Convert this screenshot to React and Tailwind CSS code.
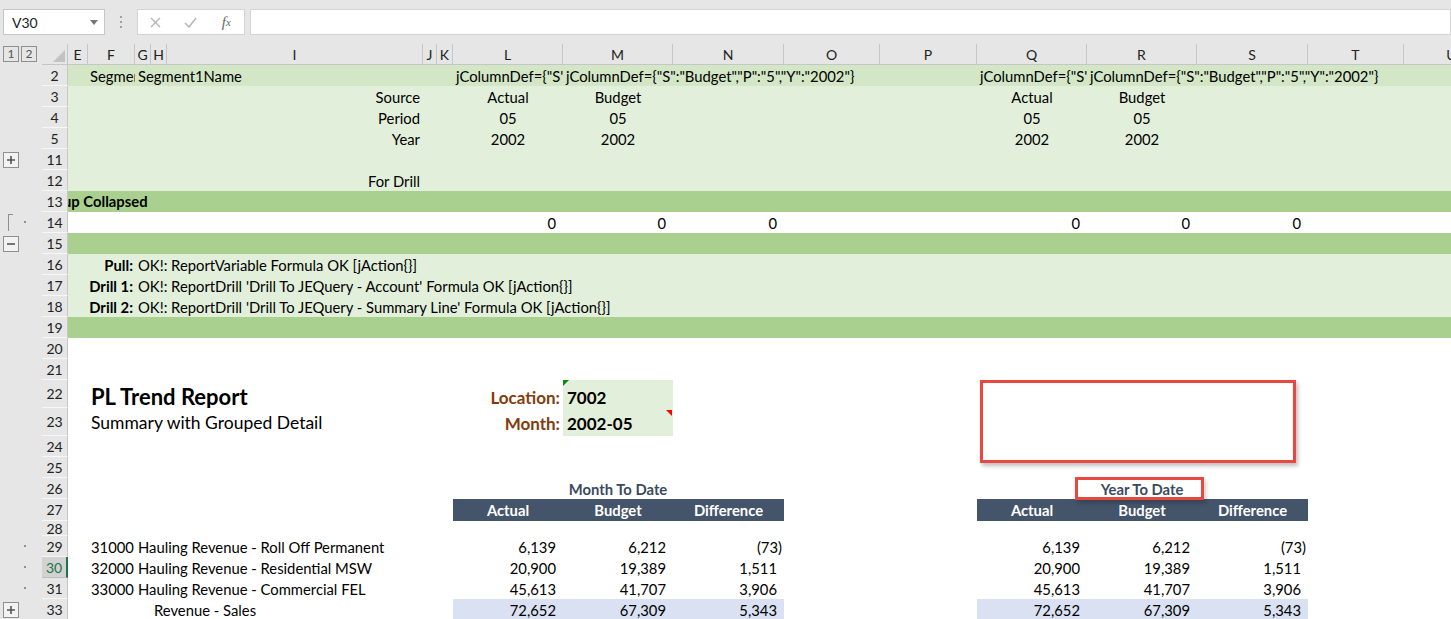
import React from "react";

// column tracks E..U, taken from the header row
const GRID =
  "grid grid-cols-[20px_47px_16px_16px_256px_14px_16px_110px_110px_111px_96px_97px_110px_110px_111px_96px_96px]";

const LETTERS = ["E", "F", "G", "H", "I", "J", "K", "L", "M", "N", "O", "P", "Q", "R", "S", "T", "U"];

const PLUS = (
  <svg width="10" height="10" viewBox="0 0 10 10">
    <path d="M5 1v8M1 5h8" stroke="#555" strokeWidth="1.6" />
  </svg>
);
const MINUS = (
  <svg width="10" height="10" viewBox="0 0 10 10">
    <path d="M1 5h8" stroke="#555" strokeWidth="1.6" />
  </svg>
);

function OutlineBtn({ top, children }) {
  return (
    <div
      className={`absolute left-[3px] ${top} w-[16px] h-[16px] border border-[#8f8f8f] bg-[#f2f2f2] flex items-center justify-center`}
    >
      {children}
    </div>
  );
}

const Dot = () => <div className="absolute left-[24px] top-[9px] w-[2px] h-[2px] bg-[#8f8f8f]" />;

function Row({ n, h, bg = "bg-white", outline, selected, children }) {
  return (
    <div className={`flex ${h}`}>
      <div className="relative w-[42px] shrink-0 bg-[#e6e6e6]">{outline}</div>
      <div
        className={
          selected
            ? "w-[26px] shrink-0 flex items-center justify-center bg-[#d2d2d2] text-[#217346] border-b border-[#bdbdbd] border-r-2 border-r-[#217346] text-[14px]"
            : "w-[26px] shrink-0 flex items-center justify-center bg-[#e6e6e6] text-[#222] border-b border-[#f7f7f7] border-r border-r-[#c6c6c6] text-[14px]"
        }
      >
        {n}
      </div>
      <div className={`${GRID} ${bg} relative text-black`}>{children}</div>
    </div>
  );
}

// one cell; c = column placement class
function C({ c, className = "", children }) {
  return (
    <div className={`${c} row-start-1 flex items-center whitespace-nowrap ${className}`}>
      {children}
    </div>
  );
}

const Num = ({ c, v, className = "" }) => {
  const neg = v.startsWith("(");
  return (
    <C c={c} className={`justify-end text-[14.8px] ${neg ? "pr-[2px]" : "pr-[7px]"} ${className}`}>
      {v}
    </C>
  );
};

const lines = [
  { n: 29, code: "31000", name: "Hauling Revenue - Roll Off Permanent", v: ["6,139", "6,212", "(73)"] },
  { n: 30, code: "32000", name: "Hauling Revenue - Residential MSW", v: ["20,900", "19,389", "1,511"], selected: true },
  { n: 31, code: "33000", name: "Hauling Revenue - Commercial FEL", v: ["45,613", "41,707", "3,906"] },
];

const drills = [
  { n: 16, label: "Pull:", text: "OK!: ReportVariable Formula OK [jAction{}]" },
  { n: 17, label: "Drill 1:", text: "OK!: ReportDrill 'Drill To JEQuery - Account' Formula OK [jAction{}]" },
  { n: 18, label: "Drill 2:", text: "OK!: ReportDrill 'Drill To JEQuery - Summary Line' Formula OK [jAction{}]" },
];

export default function App() {
  return (
    <div className="relative w-[1451px] h-[619px] overflow-hidden bg-white font-['Lato',sans-serif] text-[14.8px]">
      {/* formula bar */}
      <div className="h-[44px] bg-[#e6e6e6] flex items-start pt-[9px]">
        <div className="ml-[3px] w-[102px] h-[26px] bg-white border border-[#c6c6c6] flex items-center justify-between pl-[8px] pr-[6px] text-[14px] text-[#222]">
          <span>V30</span>
          <svg width="8" height="5" viewBox="0 0 8 5">
            <path d="M0 0h8L4 5z" fill="#777" />
          </svg>
        </div>
        <div className="w-[32px] h-[26px] flex flex-col items-center justify-center gap-[3px]">
          <div className="w-[2px] h-[2px] bg-[#a0a0a0]" />
          <div className="w-[2px] h-[2px] bg-[#a0a0a0]" />
          <div className="w-[2px] h-[2px] bg-[#a0a0a0]" />
        </div>
        <div className="w-[108px] h-[26px] bg-white border border-[#d4d4d4] flex items-center">
          <div className="w-[36px] flex justify-center">
            <svg width="11" height="11" viewBox="0 0 11 11">
              <path d="M1 1l9 9M10 1l-9 9" stroke="#b4b4b4" strokeWidth="1.3" />
            </svg>
          </div>
          <div className="w-[36px] flex justify-center">
            <svg width="13" height="11" viewBox="0 0 13 11">
              <path d="M1 6l4 4 7-9" stroke="#b4b4b4" strokeWidth="1.5" fill="none" />
            </svg>
          </div>
          <div className="w-[36px] flex justify-center font-['Liberation_Serif',serif] italic text-[15px] text-[#666]">
            f<span className="text-[11px] mt-[3px]">x</span>
          </div>
        </div>
        <div className="ml-[5px] flex-1 h-[26px] bg-white border border-[#d4d4d4]" />
      </div>

      {/* column headers */}
      <div className="flex h-[21px] bg-[#e6e6e6]">
        <div className="relative w-[42px] shrink-0">
          <div className="absolute left-[3px] top-[2px] w-[16px] h-[16px] border border-[#8f8f8f] flex items-center justify-center text-[12px] text-[#555]">
            1
          </div>
          <div className="absolute left-[21px] top-[2px] w-[16px] h-[16px] border border-[#8f8f8f] flex items-center justify-center text-[12px] text-[#555]">
            2
          </div>
        </div>
        <div className="w-[26px] shrink-0 border-r border-b border-[#c6c6c6] flex items-end justify-end pr-[2px] pb-[2px]">
          <svg width="12" height="12" viewBox="0 0 12 12">
            <path d="M12 0v12H0z" fill="#c2c2c2" />
          </svg>
        </div>
        <div className={`${GRID} border-b border-[#c6c6c6]`}>
          {LETTERS.map((l) => (
            <div key={l} className="flex items-center justify-center border-r border-[#c6c6c6] text-[14px] text-[#222]">
              {l}
            </div>
          ))}
        </div>
      </div>

      {/* sheet */}
      <Row n={2} h="h-[21px]" bg="bg-[#d3e6c6]">
        <C c="col-start-2" className="overflow-hidden pl-[2px]">Segment1Code</C>
        <C c="col-start-3" className="pl-[3px]">Segment1Name</C>
        <C c="col-start-8" className="overflow-hidden pl-[3px]">jColumnDef={'{"S":"Actual","P":"5","Y":"2002"}'}</C>
        <C c="col-start-9" className="pl-[3px]">jColumnDef={'{"S":"Budget","P":"5","Y":"2002"}'}</C>
        <C c="col-start-13" className="overflow-hidden pl-[3px]">jColumnDef={'{"S":"Actual","P":"5","Y":"2002"}'}</C>
        <C c="col-start-14" className="pl-[3px]">jColumnDef={'{"S":"Budget","P":"5","Y":"2002"}'}</C>
      </Row>
      {[
        [3, "Source", "Actual", "Budget"],
        [4, "Period", "05", "05"],
        [5, "Year", "2002", "2002"],
      ].map(([n, label, a, b]) => (
        <Row key={n} n={n} h="h-[21px]" bg="bg-[#e2efda]">
          <C c="col-start-5" className="justify-end pr-[3px]">{label}</C>
          <C c="col-start-8" className="justify-center">{a}</C>
          <C c="col-start-9" className="justify-center">{b}</C>
          <C c="col-start-13" className="justify-center">{a}</C>
          <C c="col-start-14" className="justify-center">{b}</C>
        </Row>
      ))}
      <Row n={11} h="h-[21px]" bg="bg-[#e2efda]" outline={<OutlineBtn top="top-[3px]">{PLUS}</OutlineBtn>} />
      <Row n={12} h="h-[21px]" bg="bg-[#e2efda]">
        <C c="col-start-5" className="justify-end pr-[3px]">For Drill</C>
      </Row>
      <Row n={13} h="h-[21px]" bg="bg-[#a9d08e]">
        <C c="col-start-1 col-span-5" className="overflow-hidden font-bold">
          <span className="ml-[-5px]">up Collapsed</span>
        </C>
      </Row>
      <Row
        n={14}
        h="h-[21px]"
        outline={
          <>
            <div className="absolute left-[8px] top-[2px] w-[5px] h-[17px] border-l border-t border-[#8f8f8f]" />
            <Dot />
          </>
        }
      >
        {["col-start-8", "col-start-9", "col-start-10", "col-start-13", "col-start-14", "col-start-15"].map((c) => (
          <Num key={c} c={c} v="0" />
        ))}
      </Row>
      <Row n={15} h="h-[21px]" bg="bg-[#a9d08e]" outline={<OutlineBtn top="top-[3px]">{MINUS}</OutlineBtn>} />
      {drills.map((d) => (
        <Row key={d.n} n={d.n} h="h-[21px]" bg="bg-[#e2efda]">
          <C c="col-start-2" className="justify-end pr-[2px] font-bold">{d.label}</C>
          <C c="col-start-3" className="pl-[3px]">{d.text}</C>
        </Row>
      ))}
      <Row n={19} h="h-[21px]" bg="bg-[#a9d08e]" />
      <Row n={20} h="h-[21px]" />
      <Row n={21} h="h-[21px]" />
      <Row n={22} h="h-[28px]">
        <C c="col-start-2" className="items-end pb-[1px] pl-[3px] text-[22px] font-bold">PL Trend Report</C>
        <C c="col-start-8" className="items-end pb-[4px] justify-end pr-[3px] text-[17px] font-bold text-[#843c0c]">Location:</C>
        <C c="col-start-9" className="relative items-end pb-[4px] pl-[4px] bg-[#e2efda] text-[17px] font-bold">
          <div className="absolute left-0 top-0 w-0 h-0 border-t-[6px] border-r-[6px] border-t-[#0a8a0a] border-r-transparent" />
          7002
        </C>
      </Row>
      <Row n={23} h="h-[28px]">
        <C c="col-start-2" className="items-end pb-0 pl-[3px] text-[17.5px]">Summary with Grouped Detail</C>
        <C c="col-start-8" className="items-end pb-0 justify-end pr-[3px] text-[17px] font-bold text-[#843c0c]">Month:</C>
        <C c="col-start-9" className="relative items-end pb-0 pl-[4px] bg-[#e2efda] text-[17px] font-bold">
          <div className="absolute right-[1px] top-[2px] w-0 h-0 border-t-[6px] border-l-[6px] border-t-[#ff0000] border-l-transparent" />
          2002-05
        </C>
      </Row>
      <Row n={24} h="h-[21px]" />
      <Row n={25} h="h-[21px]" />
      <Row n={26} h="h-[21px]">
        <C c="col-start-9" className="justify-center font-bold text-[#3b4a5f]">Month To Date</C>
        <C c="col-start-14" className="justify-center font-bold text-[#3b4a5f]">Year To Date</C>
      </Row>
      <Row n={27} h="h-[22px]">
        {[
          ["col-start-8", "Actual"],
          ["col-start-9", "Budget"],
          ["col-start-10", "Difference"],
          ["col-start-13", "Actual"],
          ["col-start-14", "Budget"],
          ["col-start-15", "Difference"],
        ].map(([c, t]) => (
          <C key={c} c={c} className="justify-center bg-[#44546a] border-b-2 border-black font-bold text-white">
            {t}
          </C>
        ))}
      </Row>
      <Row n={28} h="h-[15px]" />
      {lines.map((l) => (
        <Row
          key={l.n}
          n={l.n}
          h="h-[21px]"
          selected={l.selected}
          outline={<Dot />}
        >
          <C c="col-start-2" className="pl-[3px]">{l.code}</C>
          <C c="col-start-3" className="pl-[3px]">{l.name}</C>
          <Num c="col-start-8" v={l.v[0]} />
          <Num c="col-start-9" v={l.v[1]} />
          <Num c="col-start-10" v={l.v[2]} />
          <Num c="col-start-13" v={l.v[0]} />
          <Num c="col-start-14" v={l.v[1]} />
          <Num c="col-start-15" v={l.v[2]} />
        </Row>
      ))}
      <Row n={33} h="h-[21px]" outline={<OutlineBtn top="top-[3px]">{PLUS}</OutlineBtn>}>
        <C c="col-start-4" className="pl-[3px]">Revenue - Sales</C>
        <Num c="col-start-8" v="72,652" className="bg-[#d9e1f2]" />
        <Num c="col-start-9" v="67,309" className="bg-[#d9e1f2]" />
        <Num c="col-start-10" v="5,343" className="bg-[#d9e1f2]" />
        <Num c="col-start-13" v="72,652" className="bg-[#d9e1f2]" />
        <Num c="col-start-14" v="67,309" className="bg-[#d9e1f2]" />
        <Num c="col-start-15" v="5,343" className="bg-[#d9e1f2]" />
      </Row>

      {/* red annotation boxes drawn over the sheet */}
      <div className="absolute left-[980px] top-[380px] w-[316px] h-[83px] border-[3px] border-[#e8483f] shadow-[2px_3px_4px_rgba(0,0,0,0.25)]" />
      <div className="absolute left-[1075px] top-[477px] w-[129px] h-[23px] border-[3px] border-[#e8483f] shadow-[2px_3px_4px_rgba(0,0,0,0.2)]" />
    </div>
  );
}
